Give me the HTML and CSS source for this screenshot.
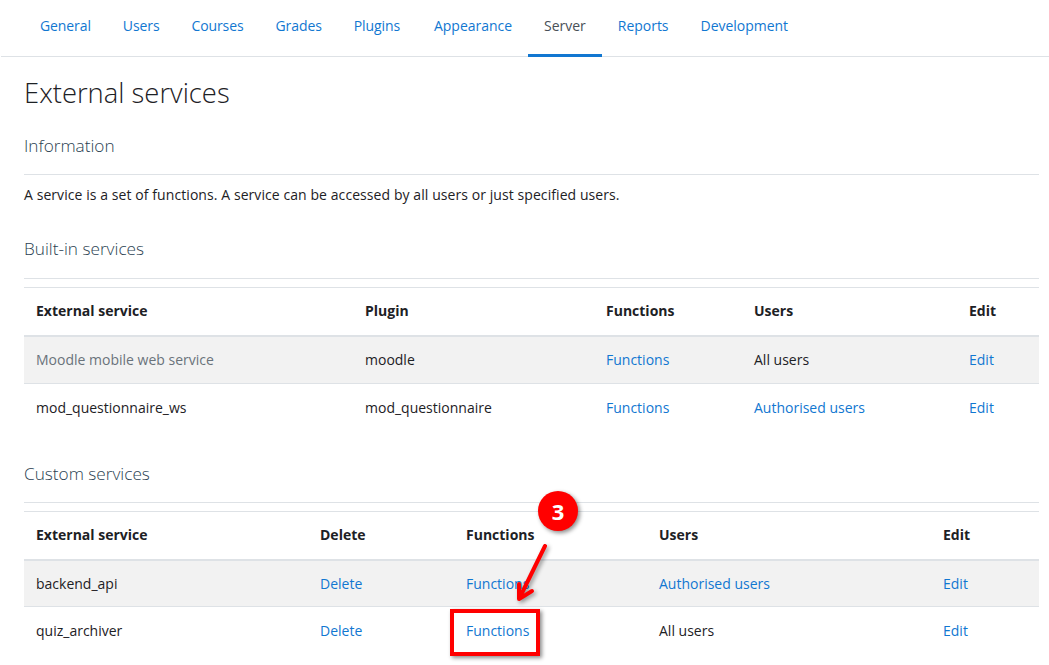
FILE: index.html
```html
<!DOCTYPE html>
<html lang="en">
<head>
<meta charset="utf-8">
<title>External services</title>
<link rel="stylesheet" href="styles.css">
</head>
<body>
<nav class="tabs">
  <a class="tab tight" href="#">General</a>
  <a class="tab tight" href="#">Users</a>
  <a class="tab tight" href="#">Courses</a>
  <a class="tab tight" href="#">Grades</a>
  <a class="tab tight" href="#">Plugins</a>
  <a class="tab shifted" href="#">Appearance</a>
  <a class="tab active" href="#">Server</a>
  <a class="tab" href="#">Reports</a>
  <a class="tab" href="#">Development</a>
</nav>
<main class="content">
  <h1>External services</h1>
  <h3 class="section info-head">Information</h3>
  <p class="intro">A service is a set of functions. A service can be accessed by all users or just specified users.</p>
  <h3 class="section builtin-head">Built-in services</h3>
  <table class="services builtin">
    <colgroup><col class="b1"><col class="b2"><col class="b3"><col class="b4"><col class="b5"></colgroup>
    <thead><tr><th>External service</th><th>Plugin</th><th>Functions</th><th>Users</th><th>Edit</th></tr></thead>
    <tbody>
      <tr class="shaded"><td class="dimmed">Moodle mobile web service</td><td>moodle</td><td><a href="#">Functions</a></td><td>All users</td><td><a href="#">Edit</a></td></tr>
      <tr><td>mod_questionnaire_ws</td><td>mod_questionnaire</td><td><a href="#">Functions</a></td><td><a href="#">Authorised users</a></td><td><a href="#">Edit</a></td></tr>
    </tbody>
  </table>
  <h3 class="section custom-head">Custom services</h3>
  <table class="services custom">
    <colgroup><col class="c1"><col class="c2"><col class="c3"><col class="c4"><col class="c5"></colgroup>
    <thead><tr><th>External service</th><th>Delete</th><th>Functions</th><th>Users</th><th>Edit</th></tr></thead>
    <tbody>
      <tr class="shaded"><td>backend_api</td><td><a href="#">Delete</a></td><td><a href="#">Functions</a></td><td><a href="#">Authorised users</a></td><td><a href="#">Edit</a></td></tr>
      <tr><td>quiz_archiver</td><td><a href="#">Delete</a></td><td><a href="#">Functions</a></td><td>All users</td><td><a href="#">Edit</a></td></tr>
    </tbody>
  </table>
</main>
<div class="callout-box"></div>
<svg class="callout-arrow" width="60" height="80" viewBox="0 0 60 80" aria-hidden="true">
  <g fill="none" stroke="#f00" stroke-width="4" stroke-linecap="round" stroke-linejoin="round">
    <path d="M35 6 L10 57"/>
    <path d="M9 44 L9 59 L22 51"/>
  </g>
</svg>
<div class="callout-badge">3</div>
</body>
</html>
```
FILE: styles.css
```css
* { box-sizing: border-box; }
html, body { margin: 0; height: 665px; overflow: hidden; background: #fff; }
body {
  position: relative;
  font-family: "Open Sans", "Noto Sans", "Liberation Sans", sans-serif;
  font-size: 14px;
  color: #1d2125;
}
a { color: #1177d1; text-decoration: none; }

.tabs {
  display: flex;
  height: 57px;
  padding-left: 23px;
  margin-left: 1px;
  border-bottom: 1px solid #dee2e6;
}
.tab {
  display: flex;
  align-items: center;
  height: 57px;
  padding: 0 16px 3px;
  letter-spacing: -0.02px;
  border-bottom: 3px solid transparent;
}
.tab.tight { letter-spacing: -0.1px; }
.tab.shifted { margin-left: 2px; }
.tab.active { color: #495057; border-bottom-color: #1177d1; }

.content { padding: 0 10px 0 24px; }
h1 {
  margin: 0;
  padding-top: 17px;
  height: 72px;
  font-size: 27.4px;
  line-height: 38px;
  font-weight: 300;
}
.section {
  margin: 0;
  font-size: 17.2px;
  line-height: 24px;
  font-weight: 300;
  color: #2b3f52;
  border-bottom: 1px solid #dee2e6;
}
.info-head { height: 46px; padding-top: 5px; }
.intro { margin: 0; height: 44px; padding-top: 9px; line-height: 21px; letter-spacing: 0.075px; }
.builtin-head { height: 60px; padding-top: 18px; }
.custom-head { margin-top: 23px; height: 48px; padding-top: 7px; }

.services {
  width: 100%;
  table-layout: fixed;
  border-collapse: collapse;
  margin-top: 8px;
}
.services th, .services td {
  text-align: left;
  padding: 0 12px;
  border-top: 1px solid #dee2e6;
}
.services th { height: 48px; padding-bottom: 1px; font-weight: 700; border-bottom: 2px solid #dee2e6; }
.services td { height: 48px; }
.custom th { height: 49px; }
.custom .shaded td { height: 46px; }
.shaded { background: #f2f2f2; }
.dimmed { color: #6a737b; }
.b1 { width: 329px; } .b2 { width: 241px; } .b3 { width: 148px; } .b4 { width: 215px; }
.c1 { width: 284px; } .c2 { width: 146px; } .c3 { width: 193px; } .c4 { width: 284px; }

.callout-box {
  position: absolute;
  left: 450px; top: 609px;
  width: 90px; height: 47px;
  border: 4px solid #f00;
  box-shadow: 2px 2px 4px rgba(0,0,0,.45);
}
.callout-arrow {
  position: absolute;
  left: 510px; top: 540px;
  filter: drop-shadow(2px 2px 2px rgba(0,0,0,.4));
}
.callout-badge {
  position: absolute;
  left: 538px; top: 491px;
  width: 40px; height: 40px;
  border-radius: 50%;
  background: #f00;
  color: #fff;
  font-family: "Open Sans", sans-serif;
  font-size: 22px;
  font-weight: 700;
  line-height: 40px;
  text-align: center;
  box-shadow: 2px 2px 4px rgba(0,0,0,.45);
}
```
